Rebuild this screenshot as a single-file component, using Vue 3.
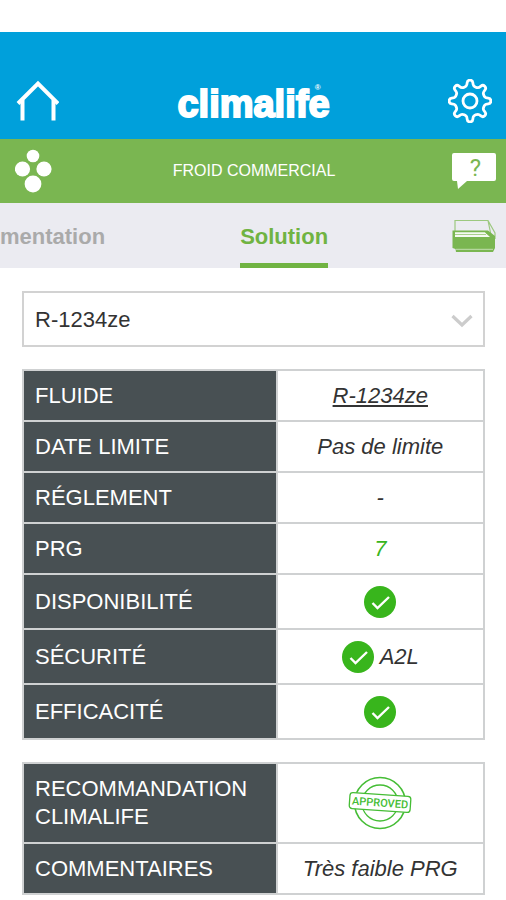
<script setup>
import { ref } from 'vue'

const fluids = ['R-1234ze']
const fluid = ref(fluids[0])

const details = [
  { label: 'FLUIDE', value: 'R-1234ze', link: true },
  { label: 'DATE LIMITE', value: 'Pas de limite' },
  { label: 'RÉGLEMENT', value: '-' },
  { label: 'PRG', value: '7', good: true },
  { label: 'DISPONIBILITÉ', check: true },
  { label: 'SÉCURITÉ', check: true, value: 'A2L' },
  { label: 'EFFICACITÉ', check: true }
]

// Outline of the eight-toothed settings wheel, rounded through segment midpoints
function gearPath() {
  const pts = []
  for (let i = 0; i < 8; i++) {
    for (const [offset, r] of [[-18, 15], [-11, 16], [-7, 21], [7, 21], [11, 16], [18, 15]]) {
      const a = ((i * 45 + offset - 90) * Math.PI) / 180
      pts.push([22 + r * Math.cos(a), 22 + r * Math.sin(a)])
    }
  }
  const mid = (p, q) => `${((p[0] + q[0]) / 2).toFixed(2)} ${((p[1] + q[1]) / 2).toFixed(2)}`
  const n = pts.length
  let d = `M${mid(pts[n - 1], pts[0])}`
  pts.forEach((p, i) => {
    d += `Q${p[0].toFixed(2)} ${p[1].toFixed(2)} ${mid(p, pts[(i + 1) % n])}`
  })
  return d + 'Z'
}
const gear = gearPath()
</script>

<template>
  <div class="page">
    <header class="top">
      <a class="icon-link" href="#" aria-label="Accueil">
        <svg width="44" height="44" viewBox="0 0 44 44" fill="none" stroke="#fff" stroke-width="4">
          <path d="M3 24.500 23 4.500 43 24.500" />
          <path d="M7.500 21V41.500M38.500 21V41.500" />
        </svg>
      </a>
      <div class="logo">climalife<span class="mark">®</span></div>
      <button class="icon-link" type="button" aria-label="Paramètres">
        <svg width="44" height="44" viewBox="0 0 44 44" fill="none" stroke="#fff" stroke-width="2.800" stroke-linejoin="round">
          <path :d="gear" />
          <circle cx="22" cy="22" r="7" />
        </svg>
      </button>
    </header>

    <div class="section">
      <svg width="44" height="44" viewBox="0 0 44 44" fill="#fff">
        <circle cx="18" cy="7" r="6.300" />
        <circle cx="7.500" cy="20" r="7.600" />
        <circle cx="29" cy="20" r="7.600" />
        <circle cx="18" cy="35" r="8.400" />
      </svg>
      <h1>FROID COMMERCIAL</h1>
      <button class="icon-link" type="button" aria-label="Aide">
        <svg width="44" height="38" viewBox="0 0 44 38">
          <path d="M2 1H42Q44 1 44 3V27Q44 29 42 29H15L6 37 5 29H2Q0 29 0 27V3Q0 1 2 1Z" fill="#fff" />
          <text class="question" x="23.500" y="24" text-anchor="middle">?</text>
        </svg>
      </button>
    </div>

    <nav class="tabs">
      <a class="tab" href="#">mentation</a>
      <a class="tab active" href="#" aria-current="page">Solution</a>
      <svg class="cabinet" width="44" height="34" viewBox="0 0 44 34">
        <path d="M3 12V1.500H36L43 14V20M36 1.500 39 16" fill="none" stroke="#9cc87f" stroke-width="1.200" />
        <path d="M0.500 11.500H36L43 17V29L41 33H4L3.500 30 0.500 29Z" fill="#7ab651" />
        <path d="M3 13.300H33L38 18H3Z" fill="#f6faf3" />
        <path d="M3 15.500H34" stroke="#a9d08d" stroke-width="1" />
        <path d="M34 13 40 17.500" stroke="#7ab651" stroke-width="2" />
        <path d="M4 30.300H41" stroke="#c4dfb1" stroke-width="1" />
      </svg>
    </nav>

    <main class="content">
      <div class="picker">
        <select v-model="fluid" aria-label="Fluide">
          <option v-for="f in fluids" :key="f">{{ f }}</option>
        </select>
        <svg class="chevron" width="22" height="14" viewBox="0 0 22 14" fill="none" stroke="#ccc" stroke-width="3.200">
          <path d="M1.500 2 11 11 20.500 2" />
        </svg>
      </div>

      <table class="details">
        <tbody>
          <tr v-for="row in details" :key="row.label" :class="{ tall: row.check }">
            <th scope="row">{{ row.label }}</th>
            <td>
              <div class="value" :class="{ good: row.good }">
                <svg v-if="row.check" width="32" height="32" viewBox="0 0 32 32">
                  <circle cx="16" cy="16" r="16" fill="#38b51c" />
                  <path d="M8.500 17 13.500 22 25 11" fill="none" stroke="#fff" stroke-width="2.400" />
                </svg>
                <a v-if="row.link" href="#">{{ row.value }}</a>
                <span v-else-if="row.value">{{ row.value }}</span>
              </div>
            </td>
          </tr>
        </tbody>
      </table>

      <table class="advice">
        <tbody>
          <tr class="stamp-row">
            <th scope="row">RECOMMANDATION CLIMALIFE</th>
            <td>
              <div class="value">
                <svg width="64" height="56" viewBox="0 0 64 56" fill="none" stroke="#45bd35">
                  <circle cx="32" cy="28" r="25.500" stroke-width="1.600" />
                  <circle cx="32" cy="28" r="18" stroke-width="1.300" />
                  <g transform="rotate(4 32 28)">
                    <rect x="1.500" y="19.500" width="61" height="16" rx="3" fill="#fff" stroke-width="1.300" />
                    <text class="stamp" x="32" y="31.500" text-anchor="middle">APPROVED</text>
                  </g>
                </svg>
              </div>
            </td>
          </tr>
          <tr>
            <th scope="row">COMMENTAIRES</th>
            <td><div class="value">Très faible PRG</div></td>
          </tr>
        </tbody>
      </table>
    </main>
  </div>
</template>

<style>
body {
  background: #fff;
}
</style>

<style scoped>
.page {
  padding-top: 32px;
  font-family: "Liberation Sans", Arial, sans-serif;
  font-size: 22px;
  color: #333;
}

svg {
  display: block;
}

.top,
.section {
  display: grid;
  grid-template-columns: 44px 1fr 44px;
  align-items: center;
  color: #fff;
}

.top {
  min-height: 70px;
  padding: 34px 14px 3px 15px;
  background: #00a0db;
}

.icon-link {
  display: block;
  padding: 0;
  border: 0;
  background: none;
  cursor: pointer;
}

.logo {
  position: relative;
  justify-self: center;
  padding-top: 6px;
  font-size: 38px;
  font-weight: bold;
  line-height: 44px;
  -webkit-text-stroke: 2px #fff;
}

.mark {
  position: absolute;
  top: 8px;
  right: 9px;
  font-size: 8px;
  line-height: 8px;
  -webkit-text-stroke: 0;
}

.section {
  min-height: 64px;
  padding: 0 10px 0 12px;
  background: #7ab651;
}

.section svg {
  margin-left: 3px;
}

.section .icon-link svg {
  margin-left: 0;
}

.section h1 {
  margin: 0;
  font-size: 16px;
  font-weight: normal;
  text-align: center;
}

.question {
  font-family: Roboto, sans-serif;
  font-size: 24px;
  fill: #7ab651;
}

.tabs {
  display: flex;
  align-items: center;
  height: 65px;
  padding-right: 10px;
  background: #ebebf1;
}

.tab {
  box-sizing: border-box;
  height: 65px;
  margin-right: 135px;
  padding-top: 2px;
  border-bottom: 5px solid transparent;
  font-weight: bold;
  line-height: 64px;
  color: #aaa;
  text-decoration: none;
}

.tab.active {
  margin-right: 0;
  border-color: #70b342;
  color: #70b342;
}

.cabinet {
  flex: none;
  margin-left: auto;
}

.content {
  display: grid;
  gap: 22px;
  padding: 23px 21px 6px 22px;
}

.picker {
  position: relative;
}

.picker select {
  display: block;
  width: 100%;
  height: 56px;
  padding: 0 48px 0 11px;
  border: 2px solid #d2d2d2;
  border-radius: 0;
  background: #fff;
  font: inherit;
  color: inherit;
  appearance: none;
}

.chevron {
  position: absolute;
  top: 23px;
  right: 12px;
  pointer-events: none;
}

table {
  width: 100%;
  border-collapse: collapse;
  table-layout: fixed;
}

th,
td {
  box-sizing: border-box;
  padding: 0;
  border: 2px solid #cfd1d2;
}

tr {
  height: 51px;
}

.details {
  height: 371px;
}

.tall {
  height: 55px;
}

.stamp-row {
  height: 80px;
}

th {
  width: 55%;
  padding-left: 11px;
  background: #485053;
  color: #fff;
  font-weight: normal;
  line-height: 28px;
  text-align: left;
}

.value {
  display: flex;
  align-items: center;
  justify-content: center;
  gap: 6px;
  font-style: italic;
}

.value a {
  color: inherit;
}

.good {
  color: #38b51c;
}

.stamp {
  font-family: Roboto, sans-serif;
  font-size: 11px;
  font-style: normal;
  font-weight: 500;
  fill: #45bd35;
  stroke: none;
}
</style>
